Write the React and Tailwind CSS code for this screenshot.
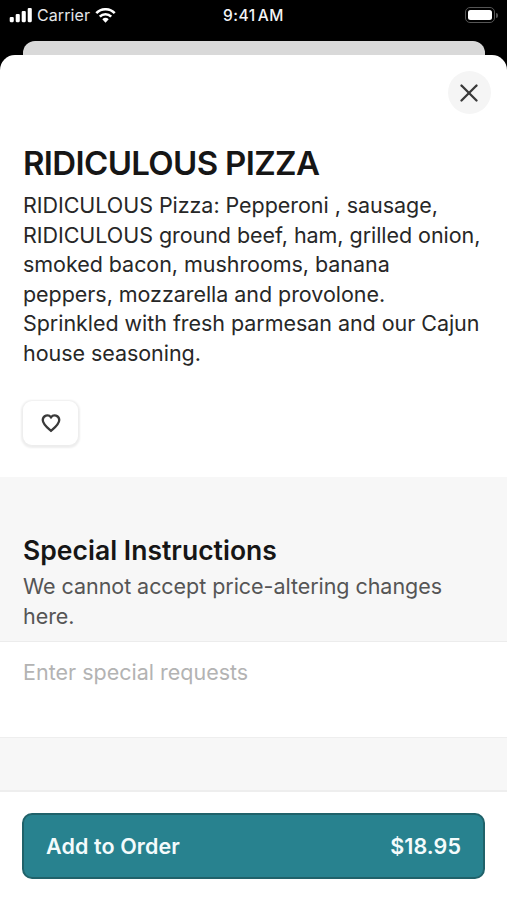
import { X } from "lucide-react";

const item = {
  name: "RIDICULOUS PIZZA",
  price: "$18.95",
  description: [
    "RIDICULOUS Pizza: Pepperoni , sausage,",
    "RIDICULOUS ground beef, ham, grilled onion,",
    "smoked bacon, mushrooms, banana",
    "peppers, mozzarella and provolone.",
    "Sprinkled with fresh parmesan and our Cajun",
    "house seasoning.",
  ],
};

function StatusBar() {
  return (
    <div className="flex h-[30px] items-center px-[9px] text-white">
      <div className="flex flex-1 items-center">
        <svg className="h-[15px] w-6" viewBox="0 0 24 15" fill="currentColor">
          <rect x="0.7" y="9" width="4.1" height="5.2" rx="1.1" />
          <rect x="6.7" y="6" width="4.1" height="8.2" rx="1.1" />
          <rect x="12.7" y="3" width="4.1" height="11.2" rx="1.1" />
          <rect x="18.7" y="0" width="4.1" height="14.2" rx="1.1" />
        </svg>
        <span className="ml-1 text-[16px] tracking-[0.1px] text-gray-200">Carrier</span>
        <svg className="ml-[5px] h-[15px] w-[21px]" viewBox="0 0 21 15" fill="none" stroke="currentColor" strokeWidth="2.6">
          <path d="M1.3 5.1a13 13 0 0 1 18.4 0" />
          <path d="M4.8 8.7a8 8 0 0 1 11.4 0" />
          <path d="M10.5 14.7l-3.2-3.5a4.7 4.7 0 0 1 6.4 0z" fill="currentColor" stroke="none" />
        </svg>
      </div>
      <div className="flex gap-[2px] pt-px text-[15.5px] font-medium tracking-[0.5px] text-gray-100">
        <span>9:41</span>
        <span>AM</span>
      </div>
      <div className="flex flex-1 items-center justify-end">
        <div className="h-4 w-[30px] rounded-[5px] border-[1.5px] border-[#555] p-[2px]">
          <div className="h-full rounded-[2.5px] bg-white" />
        </div>
        <div className="ml-px h-[5px] w-[2px] rounded-r-full bg-[#555]" />
      </div>
    </div>
  );
}

export default function App() {
  return (
    <div className="flex h-[900px] w-[507px] flex-col overflow-hidden bg-black font-['Inter',sans-serif]">
      <StatusBar />
      <div className="mr-[22px] ml-[23px] mt-[11px] h-[14px] shrink-0 rounded-t-[12px] bg-[#d9d9d9]" />

      <div className="flex flex-1 flex-col overflow-hidden rounded-t-[15px] bg-white">
        <div className="flex justify-end pt-4 pr-4">
          <button className="flex size-[43px] items-center justify-center rounded-full bg-[#f5f5f5] pr-px text-[#3a3a3a]">
            <X size={30} strokeWidth={1.9} />
          </button>
        </div>

        <div className="h-[363px] px-[23px] pt-[29px]">
          <h1 className="text-[33px] leading-10 font-semibold tracking-[-0.66px] text-[#161616]">{item.name}</h1>
          <p className="mt-[8px] text-[21.5px] leading-[29.6px] tracking-[-0.05px] whitespace-nowrap text-[#272727]">
            {item.description.map((line) => (
              <span key={line} className="block">{line}</span>
            ))}
          </p>
          <button className="mt-[32px] flex h-[44px] w-[55px] items-center justify-center rounded-[9px] shadow-[0_1px_2px_2px_rgba(0,0,0,0.07)]">
            <svg className="size-[22px]" viewBox="0 0 24 24" fill="none" stroke="#3a3a3a" strokeWidth="2.5">
              <path d="M12 20.5C8 17 3 13.2 3 8.6a5 5 0 0 1 9-2.8 5 5 0 0 1 9 2.8C21 13.2 16 17 12 20.5z" />
            </svg>
          </button>
        </div>

        <section className="h-[165px] border-b border-[#ececec] bg-[#f7f7f7] px-[23px] pt-[58px]">
          <h2 className="text-[26.5px] leading-[30px] font-semibold tracking-[0.02px] text-[#161616]">Special Instructions</h2>
          <p className="mt-[7px] text-[21.5px] leading-[29.7px] tracking-[-0.05px] text-[#555]">We cannot accept price-altering changes here.</p>
        </section>
        <textarea
          className="block h-[95px] w-full resize-none bg-white px-[23px] pt-4 text-[21.5px] leading-[29px] outline-none placeholder:text-[#b3b3b3]"
          placeholder="Enter special requests"
        />
        <div className="h-[55px] border-t border-b-2 border-[#eeeeee] bg-[#f7f7f7]" />

        <footer className="flex-1 px-[22px] pt-[21px]">
          <button className="flex h-[66px] w-full items-center justify-between rounded-[10px] border-2 border-[#20626a] bg-[#28828f] px-[22px] text-[21.5px] font-semibold tracking-[0.1px] text-[#f4fbfc]">
            <span>Add to Order</span>
            <span>{item.price}</span>
          </button>
        </footer>
      </div>
    </div>
  );
}
